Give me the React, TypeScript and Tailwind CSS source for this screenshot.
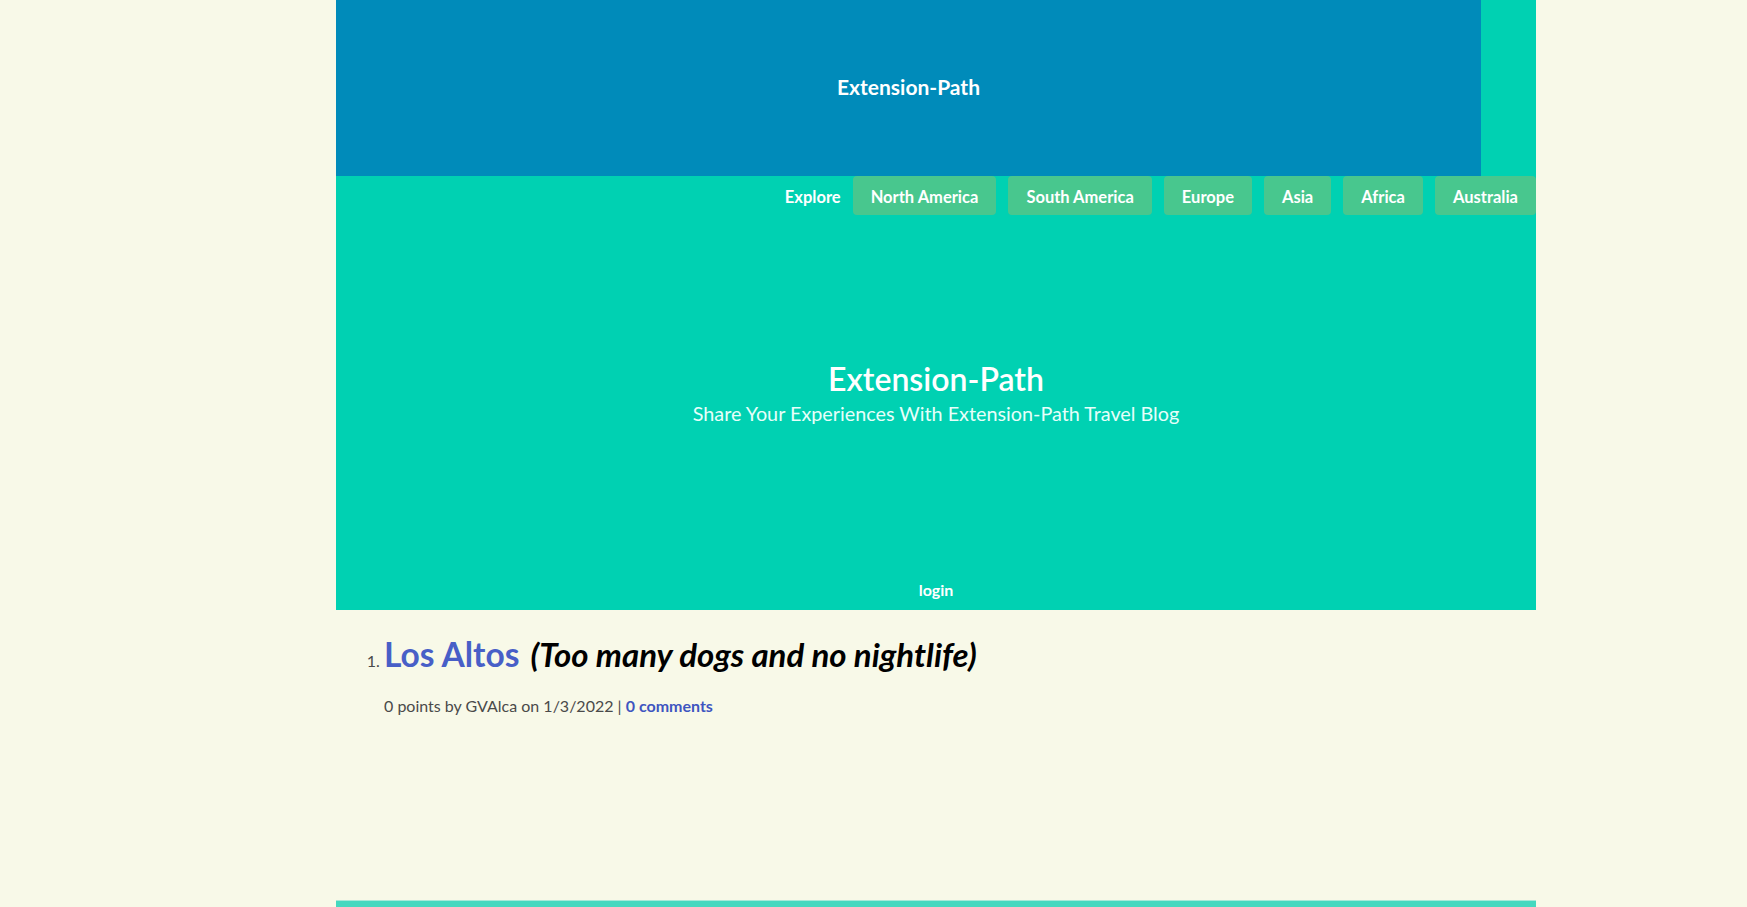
import React from "react";

export default function App() {
  const regions = ["North America", "South America", "Europe", "Asia", "Africa", "Australia"];
  return (
    <div className="min-h-[907px] bg-[#f8f9e8] font-['Lato',sans-serif]">
      <div className="ml-[336px] w-[1200px]">
        <section className="bg-[#00d1b2] text-white">
          <div className="flex">
            <div className="w-[1145px] h-[176px] bg-[#008bba] flex items-center justify-center pb-[2px]">
              <span className="text-[21px] font-bold">Extension-Path</span>
            </div>
          </div>
          <nav className="flex items-center justify-end h-[39px] gap-[12px] pt-[3px]">
            <span className="text-[16.5px] font-bold">Explore</span>
            {regions.map((r) => (
              <a key={r} className="-mt-[3px] h-[39px] pt-[3px] px-[18px] flex items-center rounded-[4px] bg-[#48c78e] text-[16.5px] font-bold">
                {r}
              </a>
            ))}
          </nav>
          <div className="h-[357px] flex flex-col items-center justify-center">
            <h1 className="text-[32px] font-semibold leading-[36px]">Extension-Path</h1>
            <h2 className="text-[19.8px] leading-[25px] text-[#e6fffa] mt-[4px]">
              Share Your Experiences With Extension-Path Travel Blog
            </h2>
          </div>
          <div className="h-[38px] flex justify-center pt-[6px]">
            <span className="text-[16px] font-bold">login</span>
          </div>
        </section>
        <div className="h-[290px] pt-[24px]">
          <ol className="list-decimal pl-[48px] text-[16px] text-[#4a4a4a]">
            <li>
              <span className="text-[33.5px] font-bold text-[#485fc7] leading-[40px]">Los Altos</span>
              <span className="ml-[11px] text-[33px] font-bold italic text-black leading-[40px]">(Too many dogs and no nightlife)</span>
              <div className="mt-[20px] text-[16px] text-[#4a4a4a]">
                0 points by GVAlca on 1/3/2022 |{" "}
                <a className="font-bold text-[#3e55c0]">0 comments</a>
              </div>
            </li>
          </ol>
        </div>
        <div className="h-[7px] bg-[#45d8bf] border-t border-[#a8e8d8]"></div>
      </div>
    </div>
  );
}
